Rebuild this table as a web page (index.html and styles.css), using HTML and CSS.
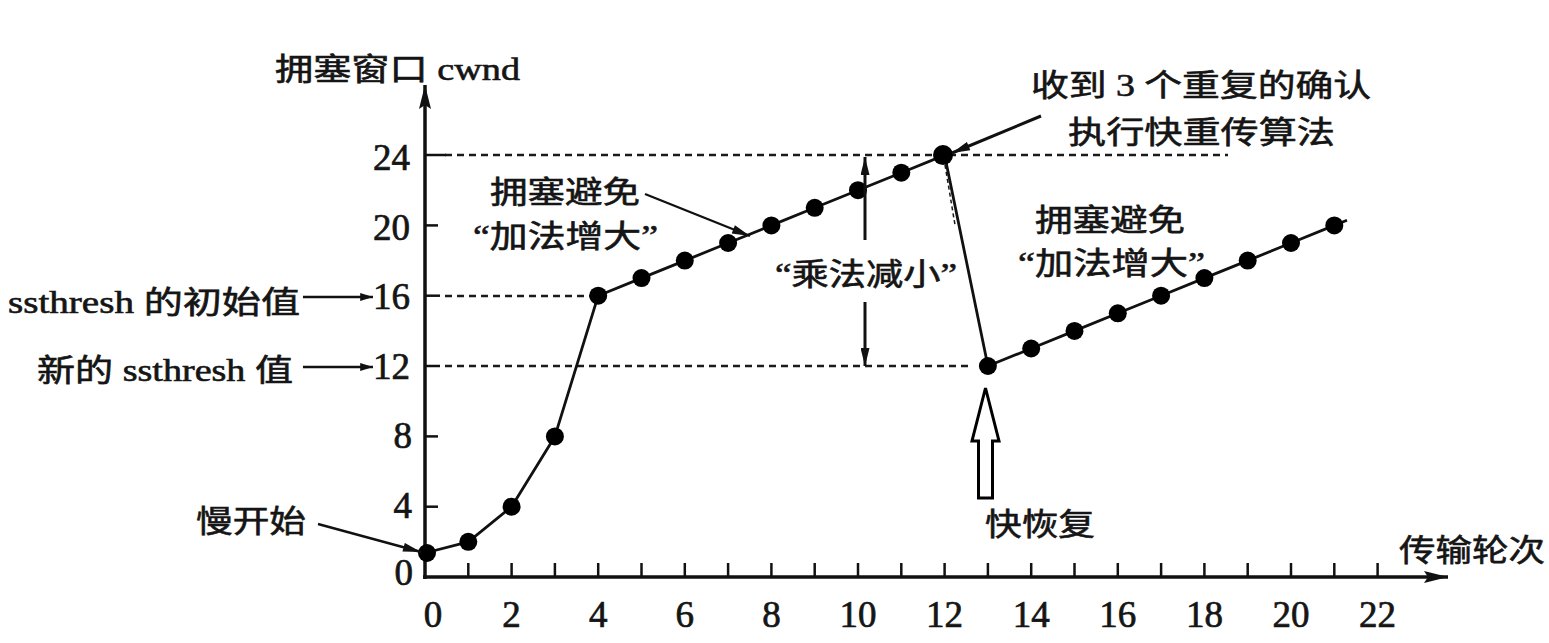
FILE: index.html
```html
<!DOCTYPE html>
<html lang="zh-CN">
<head>
<meta charset="utf-8">
<title>TCP 拥塞控制</title>
<link rel="stylesheet" href="styles.css">
</head>
<body>
<div class="figure">
<svg class="chart" width="1549" height="643" viewBox="0 0 1549 643" xmlns="http://www.w3.org/2000/svg">
  <defs>
    <marker id="ah" viewBox="0 0 20 10" refX="20" refY="5" markerWidth="20" markerHeight="9" orient="auto" markerUnits="userSpaceOnUse">
      <path d="M0,0 L20,5 L0,10 z" class="head"/>
    </marker>
    <marker id="ahs" viewBox="0 0 16 10" refX="16" refY="5" markerWidth="16" markerHeight="8" orient="auto" markerUnits="userSpaceOnUse">
      <path d="M0,0 L16,5 L0,10 z" class="head"/>
    </marker>
    <marker id="axh" viewBox="0 0 24 12" refX="24" refY="6" markerWidth="24" markerHeight="12" orient="auto" markerUnits="userSpaceOnUse">
      <path d="M0,0 L24,6 L0,12 L4,6 z" class="head"/>
    </marker>
  </defs>

  <!-- dashed guide lines -->
  <line class="dash" x1="445" y1="155" x2="1228" y2="155"/>
  <line class="dash" x1="445" y1="296" x2="598" y2="296"/>
  <line class="dash" x1="445" y1="366" x2="968" y2="366"/>
  <line class="dash thin" x1="945" y1="165" x2="955" y2="225"/>

  <!-- axes -->
  <line class="axis" x1="425" y1="579" x2="425" y2="85" marker-end="url(#axh)"/>
  <line class="axis" x1="423" y1="577" x2="1448" y2="577" marker-end="url(#axh)"/>

  <!-- y ticks -->
  <line class="tick" x1="425" y1="155" x2="446" y2="155"/>
  <line class="tick" x1="425" y1="225.4" x2="438" y2="225.4"/>
  <line class="tick" x1="425" y1="295.7" x2="440" y2="295.7"/>
  <line class="tick" x1="425" y1="366" x2="440" y2="366"/>
  <line class="tick" x1="425" y1="436.4" x2="438" y2="436.4"/>
  <line class="tick" x1="425" y1="506.7" x2="438" y2="506.7"/>

  <!-- x ticks -->
  <g class="tick">
    <line x1="468.3" y1="563" x2="468.3" y2="577"/>
    <line x1="511.6" y1="563" x2="511.6" y2="577"/>
    <line x1="554.9" y1="563" x2="554.9" y2="577"/>
    <line x1="598.2" y1="563" x2="598.2" y2="577"/>
    <line x1="641.5" y1="563" x2="641.5" y2="577"/>
    <line x1="684.8" y1="563" x2="684.8" y2="577"/>
    <line x1="728.1" y1="563" x2="728.1" y2="577"/>
    <line x1="771.4" y1="563" x2="771.4" y2="577"/>
    <line x1="814.7" y1="563" x2="814.7" y2="577"/>
    <line x1="858" y1="563" x2="858" y2="577"/>
    <line x1="901.3" y1="563" x2="901.3" y2="577"/>
    <line x1="944.6" y1="563" x2="944.6" y2="577"/>
    <line x1="987.9" y1="563" x2="987.9" y2="577"/>
    <line x1="1031.2" y1="563" x2="1031.2" y2="577"/>
    <line x1="1074.5" y1="563" x2="1074.5" y2="577"/>
    <line x1="1117.8" y1="563" x2="1117.8" y2="577"/>
    <line x1="1161.1" y1="563" x2="1161.1" y2="577"/>
    <line x1="1204.4" y1="563" x2="1204.4" y2="577"/>
    <line x1="1247.7" y1="563" x2="1247.7" y2="577"/>
    <line x1="1291" y1="563" x2="1291" y2="577"/>
    <line x1="1334.3" y1="563" x2="1334.3" y2="577"/>
    <line x1="1377.6" y1="563" x2="1377.6" y2="577"/>
  </g>

  <!-- data line -->
  <polyline class="curve" points="425,553 468.3,541.8 511.6,506.7 554.9,436.4 598.2,295.7 641.5,278.1 684.8,260.6 728.1,243 771.4,225.4 814.7,207.8 858,190.2 901.3,172.7 944.6,155.1 987.9,366 1031.2,348.5 1074.5,330.9 1117.8,313.3 1161.1,295.7 1204.4,278.1 1247.7,260.6 1291,243 1334.3,225.4 1347,220.3"/>

  <!-- dots -->
  <g class="dot">
    <circle cx="427" cy="553" r="9"/>
    <circle cx="468.3" cy="541.8" r="9"/>
    <circle cx="511.6" cy="506.7" r="9"/>
    <circle cx="554.9" cy="436.4" r="9"/>
    <circle cx="598.2" cy="295.7" r="9"/>
    <circle cx="641.5" cy="278.1" r="9"/>
    <circle cx="684.8" cy="260.6" r="9"/>
    <circle cx="728.1" cy="243" r="9"/>
    <circle cx="771.4" cy="225.4" r="9"/>
    <circle cx="814.7" cy="207.8" r="9"/>
    <circle cx="858" cy="190.2" r="9"/>
    <circle cx="901.3" cy="172.7" r="9"/>
    <circle cx="943" cy="155.1" r="10"/>
    <circle cx="987.9" cy="366" r="9"/>
    <circle cx="1031.2" cy="348.5" r="9"/>
    <circle cx="1074.5" cy="330.9" r="9"/>
    <circle cx="1117.8" cy="313.3" r="9"/>
    <circle cx="1161.1" cy="295.7" r="9"/>
    <circle cx="1204.4" cy="278.1" r="9"/>
    <circle cx="1247.7" cy="260.6" r="9"/>
    <circle cx="1291" cy="243" r="9"/>
    <circle cx="1334.3" cy="225.4" r="9"/>
  </g>

  <!-- annotation arrows -->
  <line class="pointer" x1="318" y1="524" x2="421" y2="552" marker-end="url(#ah)"/>
  <line class="pointer" x1="645" y1="194" x2="750" y2="236" marker-end="url(#ah)"/>
  <line class="pointer bold" x1="1041" y1="116" x2="952" y2="153" marker-end="url(#ah)"/>
  <line class="pointer" x1="303" y1="297" x2="373" y2="297" marker-end="url(#ahs)"/>
  <line class="pointer" x1="303" y1="367" x2="373" y2="367" marker-end="url(#ahs)"/>
  <line class="pointer bold" x1="865" y1="240" x2="865" y2="157" marker-end="url(#ah)"/>
  <line class="pointer bold" x1="865" y1="302" x2="865" y2="366" marker-end="url(#ah)"/>
  <polygon class="hollow" points="985.5,388 999,441 992.5,441 992.5,498 978.5,498 978.5,441 972,441"/>

  <!-- labels -->
  <text class="lbl" x="275" y="80" textLength="245" lengthAdjust="spacingAndGlyphs">拥塞窗口 cwnd</text>
  <text class="lbl" x="8" y="313" textLength="292" lengthAdjust="spacingAndGlyphs">ssthresh 的初始值</text>
  <text class="lbl" x="37" y="381" textLength="256" lengthAdjust="spacingAndGlyphs">新的 ssthresh 值</text>
  <text class="lbl" x="196" y="532" textLength="110" lengthAdjust="spacingAndGlyphs">慢开始</text>
  <text class="lbl" x="490" y="203" textLength="150" lengthAdjust="spacingAndGlyphs">拥塞避免</text>
  <text class="lbl" x="473" y="247" textLength="185" lengthAdjust="spacingAndGlyphs">“加法增大”</text>
  <text class="lbl" x="775" y="285" textLength="182" lengthAdjust="spacingAndGlyphs">“乘法减小”</text>
  <text class="lbl" x="1031" y="96" textLength="340" lengthAdjust="spacingAndGlyphs">收到 3 个重复的确认</text>
  <text class="lbl" x="1068" y="143" textLength="267" lengthAdjust="spacingAndGlyphs">执行快重传算法</text>
  <text class="lbl" x="1035" y="231" textLength="150" lengthAdjust="spacingAndGlyphs">拥塞避免</text>
  <text class="lbl" x="1018" y="274" textLength="187" lengthAdjust="spacingAndGlyphs">“加法增大”</text>
  <text class="lbl" x="985" y="535" textLength="110" lengthAdjust="spacingAndGlyphs">快恢复</text>
  <text class="lbl" x="1399" y="561" textLength="146" lengthAdjust="spacingAndGlyphs">传输轮次</text>

  <!-- y axis numbers -->
  <g class="num yn">
    <text x="410" y="170">24</text>
    <text x="410" y="240">20</text>
    <text x="410" y="309">16</text>
    <text x="410" y="379">12</text>
    <text x="412" y="448">8</text>
    <text x="412" y="518">4</text>
    <text x="413" y="585">0</text>
  </g>

  <!-- x axis numbers -->
  <g class="num xn">
    <text x="433" y="627">0</text>
    <text x="511.6" y="627">2</text>
    <text x="598.2" y="627">4</text>
    <text x="684.8" y="627">6</text>
    <text x="771.4" y="627">8</text>
    <text x="858" y="627">10</text>
    <text x="944.6" y="627">12</text>
    <text x="1031.2" y="627">14</text>
    <text x="1117.8" y="627">16</text>
    <text x="1204.4" y="627">18</text>
    <text x="1291" y="627">20</text>
    <text x="1377.6" y="627">22</text>
  </g>
</svg>
</div>
</body>
</html>
```
FILE: styles.css
```css
html, body {
  margin: 0;
  padding: 0;
  background: #ffffff;
}

.figure {
  width: 1549px;
  height: 643px;
  overflow: hidden;
}

.chart {
  display: block;
}

.head {
  fill: #111111;
}

.axis {
  stroke: #111111;
  stroke-width: 3.5;
  fill: none;
}

.tick {
  stroke: #111111;
  stroke-width: 2.5;
}

.dash {
  stroke: #1a1a1a;
  stroke-width: 2.5;
  stroke-dasharray: 7 5;
}

.dash.thin {
  stroke-width: 1.5;
  stroke-dasharray: 4 3;
}

.curve {
  fill: none;
  stroke: #111111;
  stroke-width: 2.8;
  stroke-linejoin: round;
}

.dot circle {
  fill: #000000;
}

.pointer {
  stroke: #111111;
  stroke-width: 2.4;
}

.pointer.bold {
  stroke-width: 3;
}

.hollow {
  fill: #ffffff;
  stroke: #000000;
  stroke-width: 3;
  stroke-linejoin: miter;
}

.lbl {
  font-family: "Liberation Serif", "Noto Sans CJK SC", serif;
  font-size: 31px;
  fill: #151515;
  stroke: #151515;
  stroke-width: 0.6;
}

.num {
  font-family: "Liberation Serif", serif;
  font-size: 37px;
  fill: #151515;
  stroke: #151515;
  stroke-width: 0.7;
}

.yn text {
  text-anchor: end;
}

.xn text {
  text-anchor: middle;
}
```
